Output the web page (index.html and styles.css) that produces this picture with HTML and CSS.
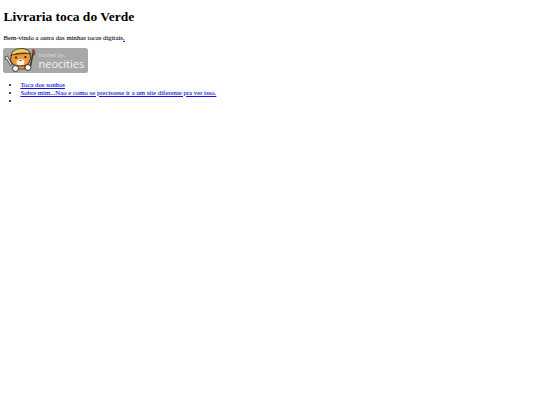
FILE: index.html
```html
<!DOCTYPE html>
<html lang="pt">
<head>
<meta charset="utf-8">
<title>Livraria toca do Verde</title>
<link rel="stylesheet" href="styles.css">
</head>
<body>
<h1>Livraria toca do Verde</h1>
<p>Bem-vindo a outra das minhas tocas digitais<a href="#">,</a></p>
<a href="#" class="badge-link"><svg class="badge" viewBox="0 0 85 25" width="85" height="25" role="img" aria-label="hosted by neocities">
<rect x="0" y="0" width="85" height="25" rx="2.500" fill="#a8a8a8"/>
<path d="M2.500 8.500 L4.500 8 L5.500 10 L9 16.500 L7.500 17.500 L4 11.500 L2 11 Z" fill="#e8e8e4" stroke="#2e2a26" stroke-width=".7"/>
<path d="M8.500 6.500 L7.500 12 L10 16.500 L15 18 L21 18 L25.500 15.500 L27.500 10.500 L27 5 Z" fill="#ee9a3c" stroke="#33241a" stroke-width=".9"/>
<path d="M8 7.500 L9.500 3.500 L14 1 L20 .5 L25 2 L27.500 5.500 L21 5 L14 5.500 Z" fill="#f3cb55" stroke="#33241a" stroke-width=".8"/>
<path d="M13.500 13 Q17.500 10 21.500 12.500 L21 16.500 L17 17.500 L14 16.500 Z" fill="#fbf0e0"/>
<circle cx="13" cy="9.500" r="1.100" fill="#20140c"/>
<circle cx="22.500" cy="9" r="1.100" fill="#20140c"/>
<path d="M16.300 12 h2.600 l-1.300 1.400 z" fill="#6e2a1c"/>
<path d="M12 18 L22 18 L22 21 L13 21 Z" fill="#e58f36" stroke="#33241a" stroke-width=".6"/>
<circle cx="12.500" cy="20.500" r="3" fill="#f6f3ec" stroke="#2e2a26" stroke-width=".9"/>
<circle cx="25" cy="19.500" r="3" fill="#f6f3ec" stroke="#2e2a26" stroke-width=".9"/>
<path d="M27.500 18 L29.800 6" stroke="#4a2c1c" stroke-width="1.500"/>
<path d="M29 6.500 L30 1 L32 3.500 L31.500 7 Z" fill="#a8443c" stroke="#3a2218" stroke-width=".5"/>
<text x="36" y="8.800" class="badge-small">hosted by,</text>
<text x="35.500" y="20" class="badge-large">neocities</text>
</svg></a>
<ul>
<li><a href="#">Toca dos sonhos</a></li>
<li><a href="#">Sobre mim...Nao e como se precisasse ir a um site diferente pra ver isso.</a></li>
<li></li>
</ul>
</body>
</html>
```
FILE: styles.css
```css
html, body {
  background: #fff;
}
body {
  margin: 0 3.4px;
  font-family: "Liberation Serif", serif;
  font-size: 6.75px;
  line-height: 7.6px;
  color: #111;
}
h1 {
  margin: 9px 0;
  font-size: 13.5px;
  line-height: 15.6px;
  font-weight: bold;
  color: #000;
}
p {
  margin: 6.75px 0;
  text-shadow: 0 0 0.7px rgba(0, 0, 0, 0.35);
}
a {
  color: #1414e0;
}
li {
  min-height: 7.6px;
  text-shadow: 0 0 0.7px rgba(0, 0, 238, 0.35);
}
.badge-link {
  display: block;
  line-height: 0;
  text-decoration: none;
}
.badge {
  display: block;
  margin-left: -0.4px;
}
.badge-small {
  font-family: "Open Sans", sans-serif;
  font-size: 5.4px;
  fill: #dcdcdc;
}
.badge-large {
  font-family: "Open Sans", sans-serif;
  font-size: 11px;
  fill: #f4f4f4;
}
ul {
  margin: 8.4px 0;
  padding-left: 17px;
}
```
